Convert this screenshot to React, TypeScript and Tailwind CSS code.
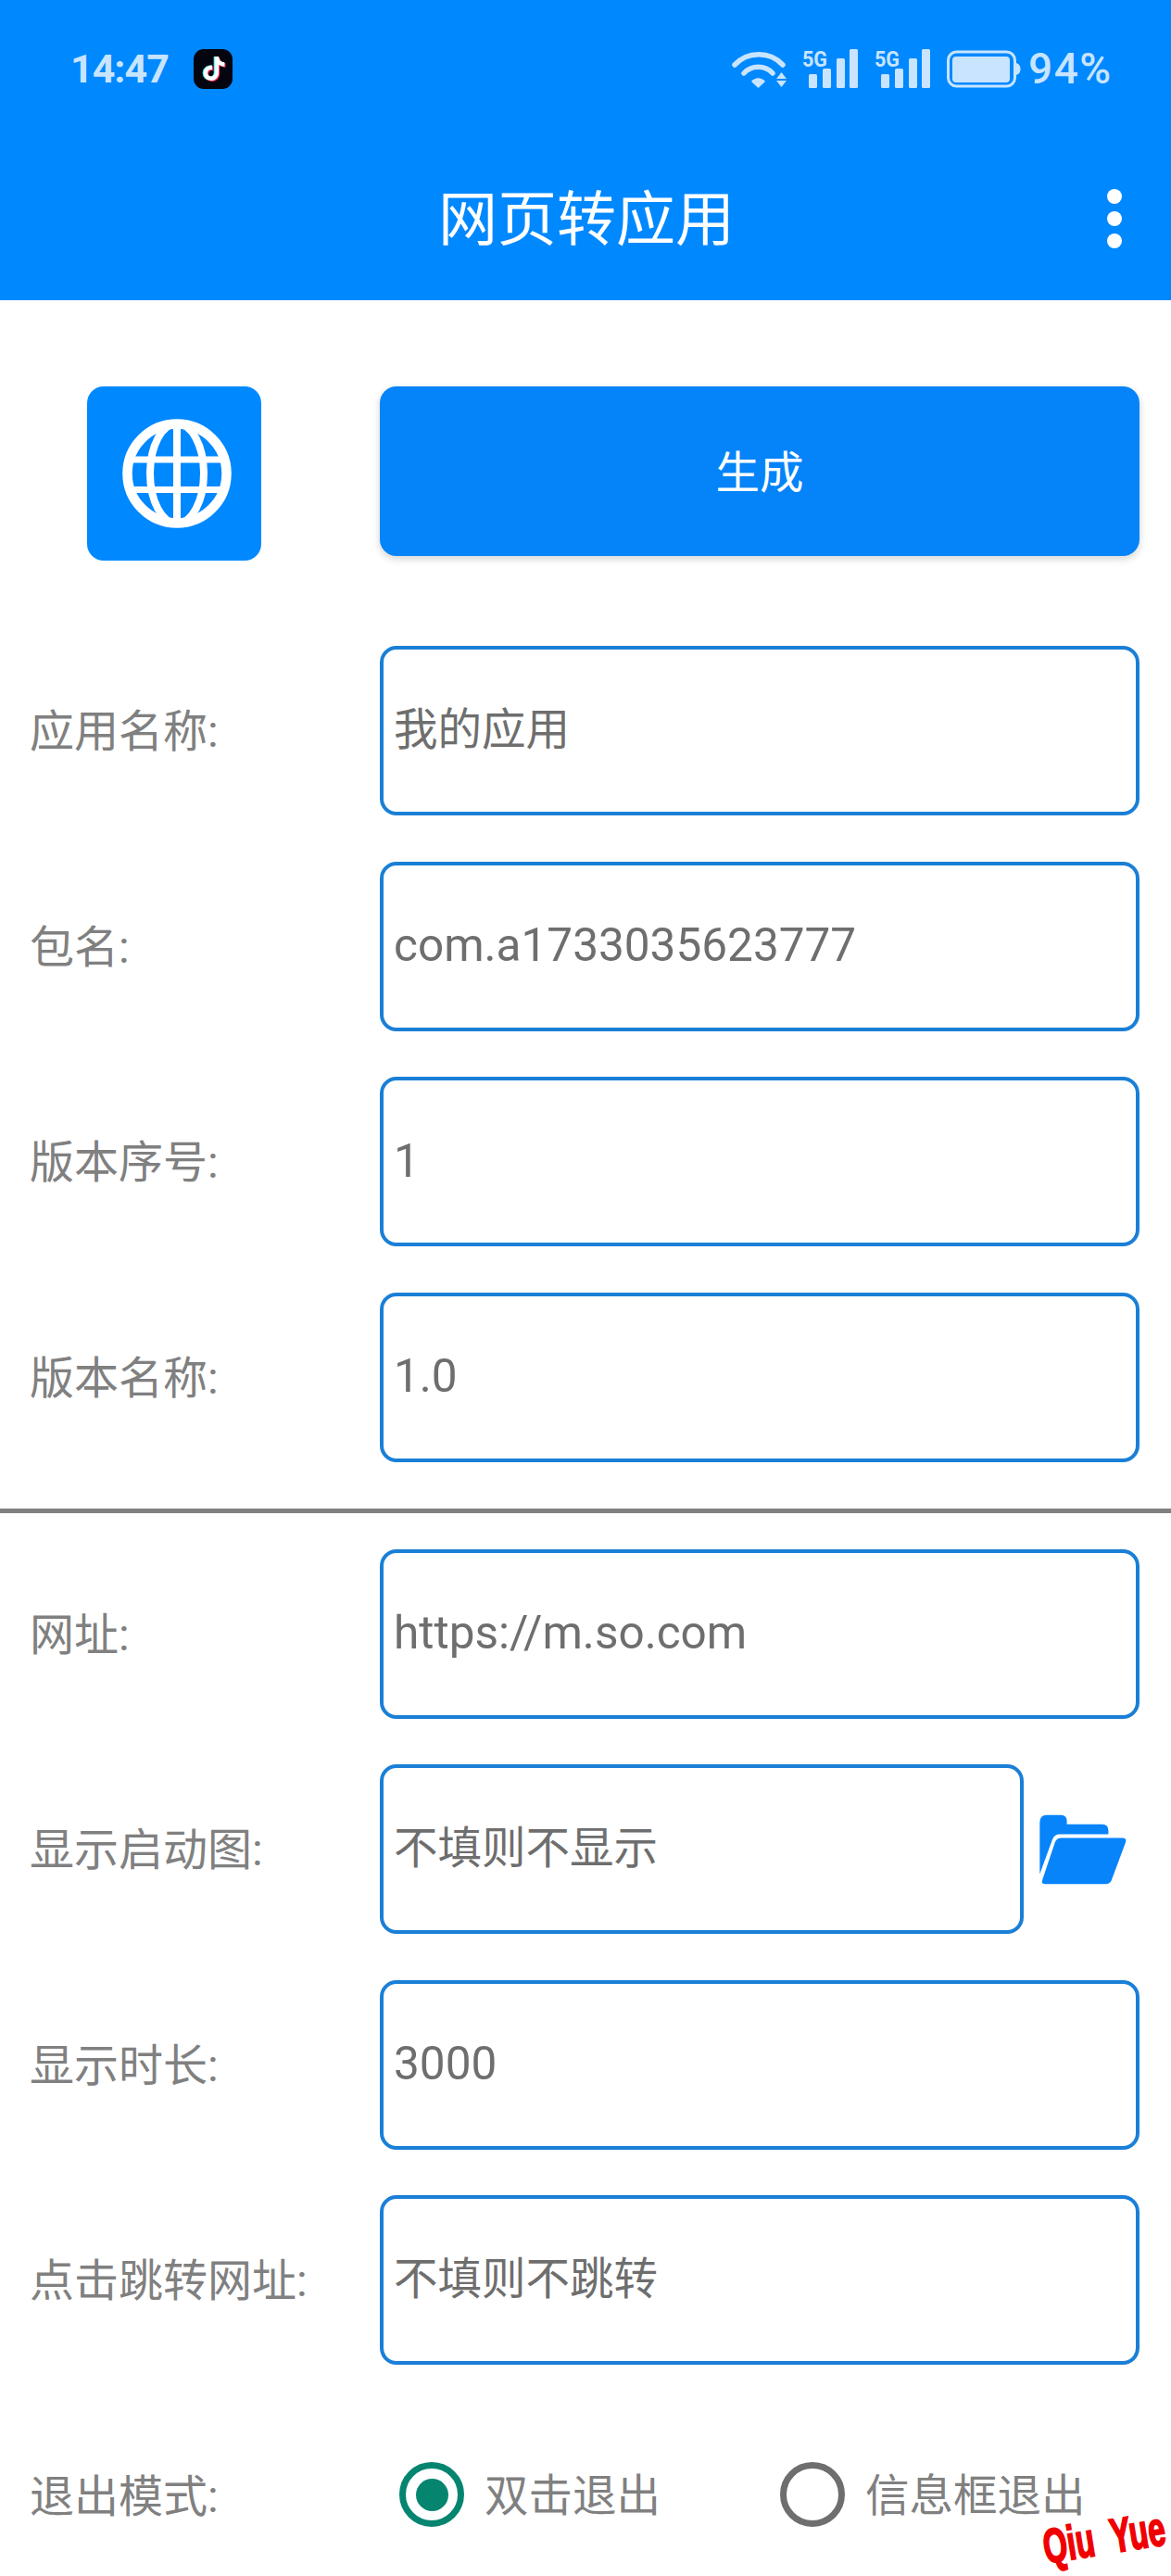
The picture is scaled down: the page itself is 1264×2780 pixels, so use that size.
import React from "react";
import { FaTiktok } from "react-icons/fa6";

const FONT = "font-['Roboto','Noto_Sans_CJK_SC',sans-serif]";

function Signal() {
  return (
    <svg width="60" height="44" viewBox="0 0 60 44" fill="#c8e4ff">
      <text x="0" y="20" fontSize="23" fontWeight="700" fontFamily="Roboto, sans-serif" textLength="27" lengthAdjust="spacingAndGlyphs">5G</text>
      <rect x="7" y="28" width="9" height="15" rx="1.5" />
      <rect x="22" y="22" width="9" height="21" rx="1.5" />
      <rect x="37" y="11" width="9" height="32" rx="1.5" />
      <rect x="51" y="1" width="9" height="42" rx="1.5" />
    </svg>
  );
}

function Wifi() {
  return (
    <svg width="60" height="44" viewBox="0 0 60 44" fill="none">
      <path d="M3 18C17 3 41 3 55 18" stroke="#c8e4ff" strokeWidth="5.5" strokeLinecap="round" />
      <path d="M13 27C21 18 36 18 44 27" stroke="#c8e4ff" strokeWidth="5.5" strokeLinecap="round" />
      <path d="M21 36C25 31 32 31 36 36L28.500 43Z" fill="#c8e4ff" />
      <path d="M53.500 26L59 33H48Z" fill="#c8e4ff" />
      <path d="M48 35H59L53.500 42Z" fill="#c8e4ff" />
    </svg>
  );
}

function Battery() {
  return (
    <svg width="80" height="44" viewBox="0 0 80 44">
      <rect x="1.500" y="4" width="72" height="37" rx="9" fill="none" stroke="#c8e4ff" strokeWidth="3" />
      <rect x="6" y="9" width="62" height="28" rx="4" fill="#c8e4ff" />
      <path d="M75 16C78 17 79.500 19 79.500 22.500C79.500 26 78 28 75 29Z" fill="#c8e4ff" />
    </svg>
  );
}

function Globe() {
  return (
    <svg width="120" height="120" viewBox="0 0 120 120" fill="none" stroke="#ffffff">
      <circle cx="60" cy="60" r="53.500" strokeWidth="10.500" />
      <ellipse cx="60" cy="60" rx="29" ry="54" strokeWidth="8" />
      <path d="M60 6V114" strokeWidth="8" />
      <path d="M12 45H108M12 77.500H108" strokeWidth="7" />
    </svg>
  );
}

function Folder() {
  return (
    <svg width="98" height="80" viewBox="360 230 295 240" fill="#0784fa">
      <path d="M367 262Q367 238 390 238H432Q455 238 455 256V268H570Q590 268 590 288V300H432Q414 300 408 318L367 430Z" />
      <path d="M437 312H635Q651 312 646 327L600 450Q595 462 580 462H385Q371 462 375 450L416 328Q421 312 437 312Z" />
    </svg>
  );
}

function TikTok() {
  return (
    <div className="relative flex h-[43px] w-[42px] items-center justify-center rounded-[11px] bg-[#050510]">
      <FaTiktok className="absolute left-[8px] top-[8px] text-[26px] text-[#25f4ee]" />
      <FaTiktok className="absolute left-[10px] top-[9px] text-[26px] text-[#fe2c55]" />
      <FaTiktok className="absolute left-[9px] top-[8px] text-[26px] text-white" />
    </div>
  );
}

function Field({ label, value, folder, latin }: { label: string; value: string; folder?: boolean; latin?: boolean }) {
  return (
    <div className="flex h-[183px] items-center">
      <div className="w-[410px] pl-[32px] pt-[3px] text-[48px] leading-none text-[#808080]">{label}</div>
      <div className="flex flex-1 items-center">
        <div
          className={`flex h-[183px] flex-1 items-center rounded-[18px] border-[4px] border-[#1a7fd6] bg-white pl-[11px] leading-none text-[#6e6e6e] ${
            latin ? "text-[49.500px]" : "text-[47.500px]"
          }`}
        >
          {value}
        </div>
        {folder && (
          <div className="ml-[15px] mr-[10px] w-[100px]">
            <Folder />
          </div>
        )}
      </div>
    </div>
  );
}

function Radio({ checked, label }: { checked?: boolean; label: string }) {
  return (
    <div className="flex items-center gap-[22px]">
      {checked ? (
        <div className="flex h-[70px] w-[70px] items-center justify-center rounded-full border-[7px] border-[#058570]">
          <div className="h-[35px] w-[35px] rounded-full bg-[#058570]" />
        </div>
      ) : (
        <div className="h-[70px] w-[70px] rounded-full border-[7px] border-[#6e6e6e]" />
      )}
      <span className="pt-[5px] text-[47.500px] leading-none text-[#808080]">{label}</span>
    </div>
  );
}

export default function App() {
  return (
    <div className={`relative h-[2780px] w-[1264px] overflow-hidden bg-white ${FONT}`}>
      <header className="h-[324px] bg-[#0088ff] pt-[52px]">
        <div className="flex h-[44px] items-center justify-between pl-[76px] pr-[64px]">
          <div className="flex items-center gap-[30px]">
            <span className="w-[103px] text-[43px] font-bold leading-none tracking-[-1px] text-[#c8e4ff]">14:47</span>
            <TikTok />
          </div>
          <div className="flex items-center">
            <Wifi />
            <div className="ml-[16px]"><Signal /></div>
            <div className="ml-[18px]"><Signal /></div>
            <div className="ml-[18px]"><Battery /></div>
            <span className="ml-[8px] w-[90px] text-[46px] font-medium leading-none tracking-[1.500px] text-[#c8e4ff]">94%</span>
          </div>
        </div>
        <div className="mt-[92px] flex h-[100px] items-center justify-between pr-[53px]">
          <div className="w-[71px]" />
          <h1 className="text-[64px] font-normal leading-none text-white">网页转应用</h1>
          <div className="-mt-[4px] flex w-[16px] flex-col gap-[8px]">
            <div className="h-[16px] w-[16px] rounded-full bg-white" />
            <div className="h-[16px] w-[16px] rounded-full bg-white" />
            <div className="h-[16px] w-[16px] rounded-full bg-white" />
          </div>
        </div>
      </header>

      <main className="pt-[93px]">
        <div className="flex items-start pr-[34px]">
          <div className="w-[410px] pl-[94px]">
            <div className="flex h-[188px] w-[188px] items-center justify-center rounded-[18px] bg-[#0088ff] pl-[5px]">
              <Globe />
            </div>
          </div>
          <button className="flex h-[183px] flex-1 items-center justify-center rounded-[18px] bg-[#0484f8] pt-[7px] text-[47.500px] leading-none text-white shadow-[0_3px_8px_rgba(0,0,0,0.18)]">
            生成
          </button>
        </div>

        <div className="mt-[92px] flex flex-col gap-[49.500px] pr-[34px]">
          <Field label="应用名称:" value="我的应用" />
          <Field label="包名:" value="com.a1733035623777" latin />
          <Field label="版本序号:" value="1" latin />
          <Field label="版本名称:" value="1.0" latin />
        </div>

        <div className="mb-[39px] mt-[50px] h-[5px] bg-[#808080]" />

        <div className="flex flex-col gap-[49.500px] pr-[34px]">
          <Field label="网址:" value="https://m.so.com" latin />
          <Field label="显示启动图:" value="不填则不显示" folder />
          <Field label="显示时长:" value="3000" latin />
          <Field label="点击跳转网址:" value="不填则不跳转" />
        </div>

        <div className="mt-[105px] flex h-[70px] items-center">
          <div className="w-[431px] pl-[32px] pt-[6px] text-[48px] leading-none text-[#808080]">退出模式:</div>
          <Radio checked label="双击退出" />
          <div className="ml-[129px]">
            <Radio label="信息框退出" />
          </div>
        </div>
      </main>

      <div className="absolute bottom-[34px] right-[7px] origin-right -rotate-[9deg] scale-x-[0.64] whitespace-pre font-['Liberation_Sans',sans-serif] text-[52px] font-bold leading-[36px] text-[#f00000] [-webkit-text-stroke:2px_#f00000]">
        Qiu  Yue
      </div>
    </div>
  );
}
